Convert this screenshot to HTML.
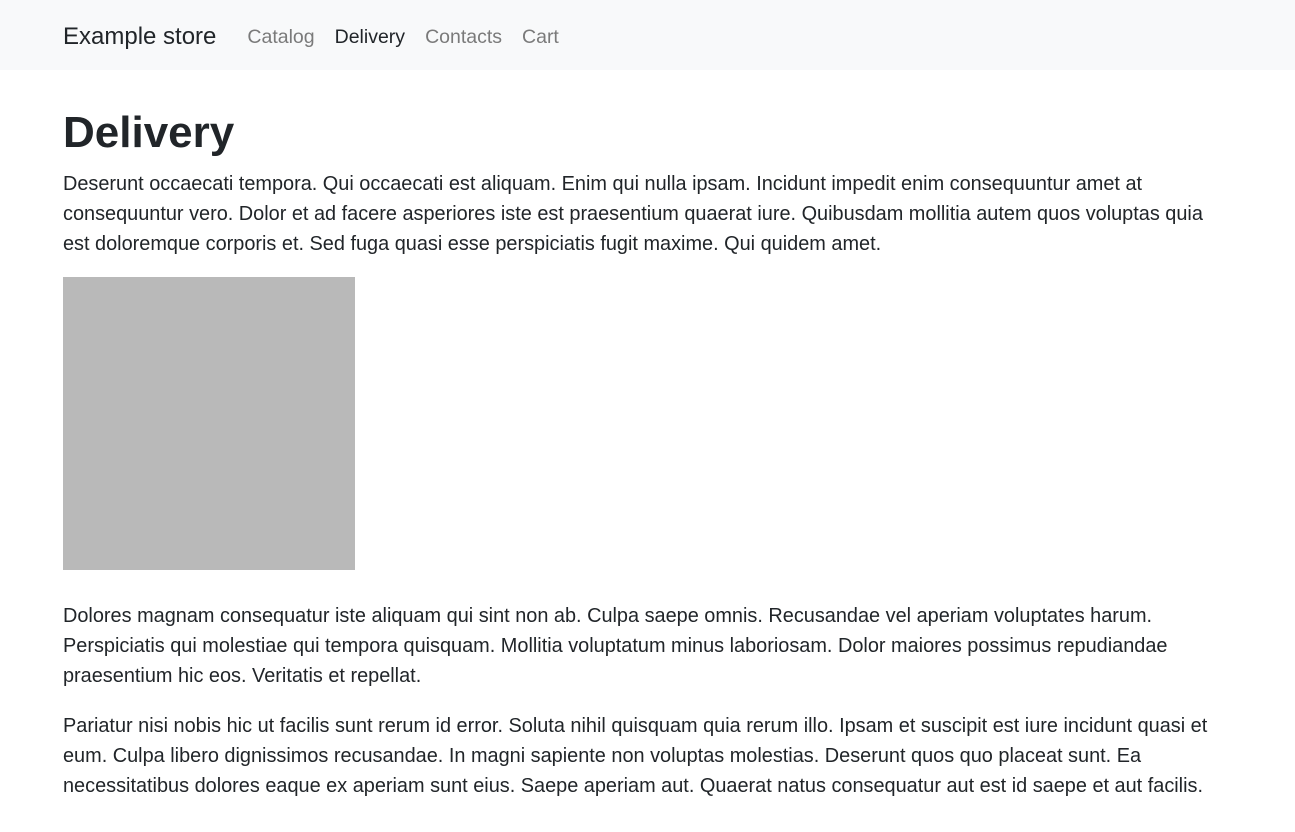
<!DOCTYPE html>
<html><head><meta charset="utf-8"><style>
body{margin:0;font-family:"Liberation Sans",sans-serif;color:#212529;background:#fff}
.nav{height:70px;background:#f8f9fa;}
.wrap{width:1230px;margin-left:63px}
.nav .wrap{display:flex;align-items:center;height:70px;padding-top:4px;box-sizing:border-box}
.brand{font-size:24px;color:#212529;margin-right:31px}
.nav a{font-size:19.5px;color:#7a7a7a;margin-right:20px;text-decoration:none}
.nav a.act{color:#212529}
h1{font-size:44px;font-weight:bold;margin:35px 0 0;line-height:56px}
p{font-size:19.9px;line-height:30px;margin:8px 0 0;white-space:nowrap}
.img{width:292px;height:293px;background:#b9b9b9;margin:18px 0 31px}
</style></head><body>
<div class="nav"><div class="wrap"><span class="brand">Example store</span><a href="#">Catalog</a><a class="act" href="#">Delivery</a><a href="#">Contacts</a><a href="#">Cart</a></div></div>
<div class="wrap">
<h1>Delivery</h1>
<p>Deserunt occaecati tempora. Qui occaecati est aliquam. Enim qui nulla ipsam. Incidunt impedit enim consequuntur amet at<br>consequuntur vero. Dolor et ad facere asperiores iste est praesentium quaerat iure. Quibusdam mollitia autem quos voluptas quia<br>est doloremque corporis et. Sed fuga quasi esse perspiciatis fugit maxime. Qui quidem amet.</p>
<div class="img"></div>
<p>Dolores magnam consequatur iste aliquam qui sint non ab. Culpa saepe omnis. Recusandae vel aperiam voluptates harum.<br>Perspiciatis qui molestiae qui tempora quisquam. Mollitia voluptatum minus laboriosam. Dolor maiores possimus repudiandae<br>praesentium hic eos. Veritatis et repellat.</p>
<p style="margin-top:20px">Pariatur nisi nobis hic ut facilis sunt rerum id error. Soluta nihil quisquam quia rerum illo. Ipsam et suscipit est iure incidunt quasi et<br>eum. Culpa libero dignissimos recusandae. In magni sapiente non voluptas molestias. Deserunt quos quo placeat sunt. Ea<br>necessitatibus dolores eaque ex aperiam sunt eius. Saepe aperiam aut. Quaerat natus consequatur aut est id saepe et aut facilis.</p>
</div>
</body></html>
